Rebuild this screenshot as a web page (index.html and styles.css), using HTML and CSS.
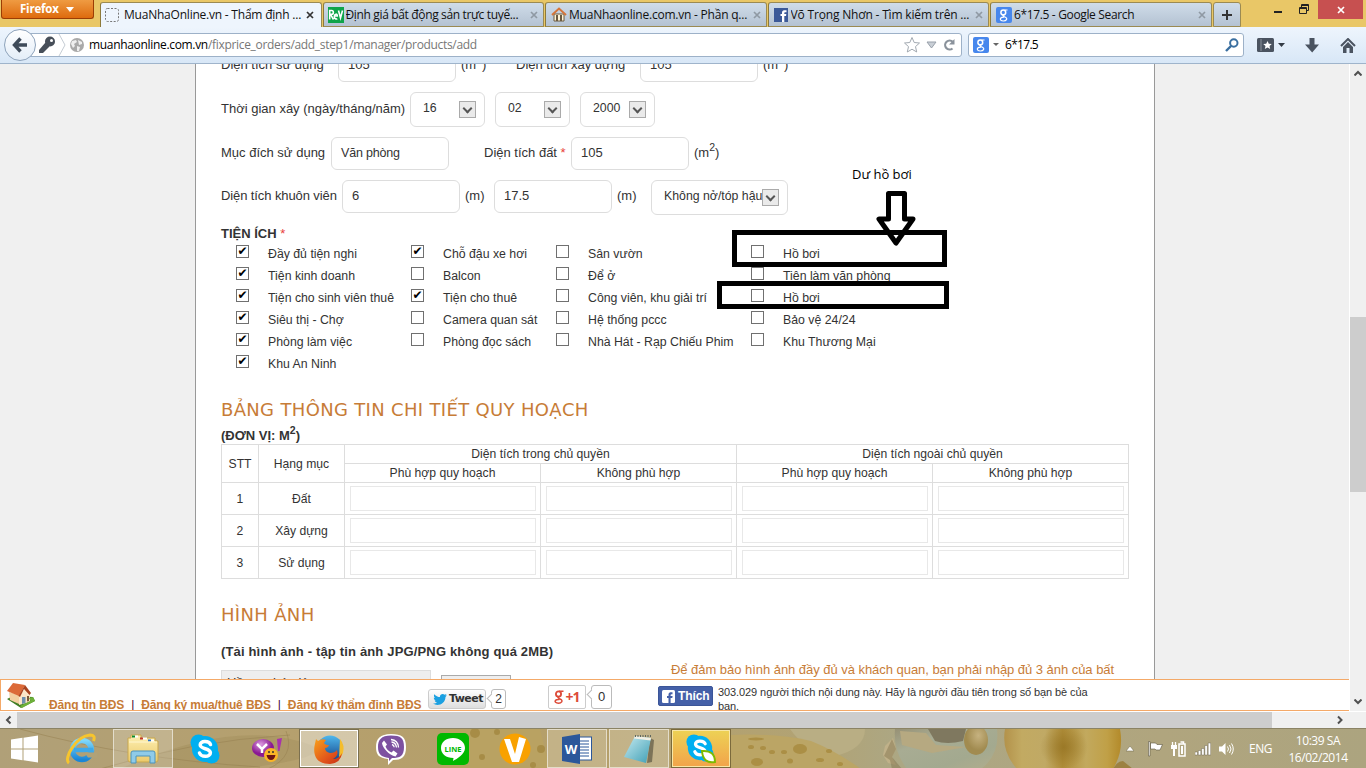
FILE: index.html
```html
<!DOCTYPE html>
<html lang="vi">
<head>
<meta charset="utf-8">
<title>MuaNhaOnline.vn - Thẩm định giá</title>
<link rel="stylesheet" href="styles.css">
</head>
<body>
<svg class="defs" width="0" height="0">
  <defs>
    <linearGradient id="fox" x1="0" y1="0" x2="1" y2="1"><stop offset="0" stop-color="#f8a01c"/><stop offset=".6" stop-color="#e2561b"/><stop offset="1" stop-color="#c62d14"/></linearGradient>
    <linearGradient id="sea" x1="0" y1="0" x2="0" y2="1"><stop offset="0" stop-color="#4fb7ec"/><stop offset="1" stop-color="#123f86"/></linearGradient>
    <linearGradient id="ie" x1="0" y1="0" x2="0" y2="1"><stop offset="0" stop-color="#7fd8fb"/><stop offset="1" stop-color="#1b86d6"/></linearGradient>
    <linearGradient id="pad" x1="0" y1="0" x2="1" y2="1"><stop offset="0" stop-color="#c7ebf1"/><stop offset="1" stop-color="#3f9fb5"/></linearGradient>
    <linearGradient id="folder" x1="0" y1="0" x2="0" y2="1"><stop offset="0" stop-color="#fdf0b4"/><stop offset="1" stop-color="#ecca6a"/></linearGradient>
    <radialGradient id="purple" cx=".4" cy=".3"><stop offset="0" stop-color="#dc9be0"/><stop offset="1" stop-color="#8a1a93"/></radialGradient>
    <linearGradient id="gold" x1="0" y1="0" x2="1" y2="0"><stop offset="0" stop-color="#b3924a"/><stop offset=".15" stop-color="#c2aa62"/><stop offset=".35" stop-color="#c0a965"/><stop offset=".5" stop-color="#af8d39"/><stop offset=".7" stop-color="#c2a95e"/><stop offset=".88" stop-color="#c0a047"/><stop offset="1" stop-color="#b38a2a"/></linearGradient>
    <radialGradient id="shade"><stop offset="0" stop-color="#92701f" stop-opacity=".7"/><stop offset="1" stop-color="#92701f" stop-opacity="0"/></radialGradient>
    <linearGradient id="silver" x1="0" y1="0" x2="1" y2="1"><stop offset="0" stop-color="#979175"/><stop offset=".3" stop-color="#a8ac93"/><stop offset=".7" stop-color="#a3a98f"/><stop offset="1" stop-color="#b2ad8c"/></linearGradient>
    <radialGradient id="bead" cx=".6" cy=".35"><stop offset="0" stop-color="#c6b280"/><stop offset="1" stop-color="#a18b50"/></radialGradient>
    <linearGradient id="wall" x1="0" y1="0" x2="1" y2="0"><stop offset="0" stop-color="#b0a078"/><stop offset=".2" stop-color="#b5a06e"/><stop offset=".42" stop-color="#b59f69"/><stop offset=".6" stop-color="#b1a375"/><stop offset=".66" stop-color="#aca784"/><stop offset=".85" stop-color="#b0a57e"/><stop offset="1" stop-color="#aca47f"/></linearGradient>
    <symbol id="skype" viewBox="0 0 32 32"><circle cx="9.500" cy="9.500" r="8" fill="#00aff0"/><circle cx="22.500" cy="22.500" r="8" fill="#00aff0"/><circle cx="16" cy="16" r="13" fill="#00aff0"/><path d="M21.500 11.500C20 7.500 11 7.500 11.200 12c.2 4.600 10.200 3 10.200 7.800 0 4.600-9.200 4.700-10.900.2" fill="none" stroke="#fff" stroke-width="3.500" stroke-linecap="round"/></symbol>
    <symbol id="g" viewBox="0 0 16 16"><rect width="16" height="16" rx="2" fill="#4787ed"/><circle cx="7.300" cy="5.400" r="2.400" fill="none" stroke="#fff" stroke-width="1.500"/><path d="M8.500 3h3M8.500 8c-3 0-1.500 1.500.5 2 3.500 1.500 1 4-1.500 4s-4-1.500-2.700-3c.8-.8 2-1 3.500-.9" fill="none" stroke="#fff" stroke-width="1.200"/></symbol>
    <symbol id="x" viewBox="0 0 8 8"><path d="M1 1l6 6M7 1L1 7" stroke="currentColor" stroke-width="1.700"/></symbol>
  </defs>
</svg>

<header class="tabstrip">
  <div class="appmenu">Firefox <svg width="8" height="5" viewBox="0 0 8 5"><path d="M0 0h8L4 5z" fill="#fff"/></svg></div>
  <div class="tab active">
    <svg width="14" height="14"><rect x=".5" y=".5" width="13" height="13" rx="2" fill="none" stroke="#777" stroke-dasharray="2 1.500"/></svg>
    <span class="tt">MuaNhaOnline.vn - Thẩm định ...</span><svg class="close" width="8" height="8"><use href="#x"/></svg>
  </div>
  <div class="tab t2">
    <svg width="16" height="16" viewBox="0 0 16 16"><rect width="16" height="16" fill="#0fa44a"/><path d="M1.700 12.500V3.500h2c2.200 0 2.200 3.800 0 3.800H2.500L5.500 12.500M6.700 9h2.600c0-2.700-3-2.300-3 .5s2 2.700 3 2.200M10.500 3.500l2 7.500 2-7.500" stroke="#fff" stroke-width="1.600" fill="none"/></svg>
    <span class="tt">Định giá bất động sản trực tuyế...</span><svg class="close" width="8" height="8"><use href="#x"/></svg>
  </div>
  <div class="tab t3">
    <svg width="16" height="16" viewBox="0 0 16 16"><path d="M3 7h10v7H3z" fill="#fff3d6" stroke="#6b5a40"/><path d="M1 8l7-6.500L15 8" fill="none" stroke="#d5753a" stroke-width="2"/><path d="M5 14V8h2v6zM9 14V8h2v6z" fill="#6b5a40"/></svg>
    <span class="tt">MuaNhaonline.com.vn - Phần q...</span><svg class="close" width="8" height="8"><use href="#x"/></svg>
  </div>
  <div class="tab t4">
    <svg width="14" height="14" viewBox="0 0 14 14"><rect width="14" height="14" fill="#3b5998"/><path d="M8 14V8H6.500V6H8V4.500C8 2.500 9.500 2 12.500 2.200v2c-1.600 0-2.200 0-2.200.9V6h2L12 8h-1.700v6z" fill="#fff"/></svg>
    <span class="tt">Võ Trọng Nhơn - Tìm kiếm trên ...</span><svg class="close" width="8" height="8"><use href="#x"/></svg>
  </div>
  <div class="tab t5">
    <svg width="16" height="16"><use href="#g"/></svg>
    <span class="tt">6*17.5 - Google Search</span><svg class="close" width="8" height="8"><use href="#x"/></svg>
  </div>
  <div class="newtab"><svg width="10" height="10"><path d="M5 0v10M0 5h10" stroke="#333" stroke-width="2"/></svg></div>
  <div class="winbtns">
    <svg width="8" height="20"><path d="M0 12h8" stroke="#222" stroke-width="2"/></svg>
    <svg width="10" height="20" fill="none" stroke="#222"><path d="M.5 7.500h7v6h-7zM2.500 7V4.500h7v6H8M.5 8.500h7M2.500 5.500h7"/></svg>
    <div class="winclose"><svg width="8" height="8"><use href="#x"/></svg></div>
  </div>
</header>

<nav class="toolbar">
  <div class="urlbar">
    <svg class="keys" width="36" height="22" viewBox="0 0 36 22"><g fill="#474f59"><circle cx="19" cy="7.500" r="5"/><path d="M14.500 8.500l4 4L12 19H8v-3z"/></g><circle cx="20.500" cy="6.500" r="1.500" fill="#fff"/><path d="M28 0l6 11-6 11" fill="none" stroke="#c5ccd4"/></svg>
    <svg class="globe" width="14" height="14" viewBox="0 0 14 14"><circle cx="7" cy="7" r="7" fill="#a9a9a9"/><path d="M2 3l4-1 1 2-3 2 1 2-2 2-2-4zM8 2l4 2v2L9 7zM7 8l3 1-1 4H7z" fill="#eee"/></svg>
    <span class="url"><b>muanhaonline.com.vn</b>/fixprice_orders/add_step1/manager/products/add</span>
    <svg width="58" height="18" viewBox="0 0 58 18"><path d="M9 1.500l2.200 5 5.300.5-4 3.600 1.200 5.400L9 13.200 4.300 16l1.200-5.400-4-3.600 5.300-.5z" fill="#fff" stroke="#a2a9b1"/><path d="M24 6h9l-4.500 6z" fill="#c9cfd6" stroke="#98a0aa"/><path d="M49.500 12.500a4.500 4.500 0 1 1 .3-6.700" fill="none" stroke="#8a929b" stroke-width="2.200"/><path d="M51.500 3v5.500H46z" fill="#8a929b"/></svg>
  </div>
  <div class="back"><svg width="16" height="16" viewBox="0 0 16 16"><path d="M8.500 1.500L2.500 8l6 6.500M3 8h12" fill="none" stroke="#3f4b5a" stroke-width="3.400"/></svg></div>
  <div class="search">
    <svg width="16" height="16"><use href="#g"/></svg>
    <svg width="6" height="4"><path d="M0 0h6L3 3z" fill="#666"/></svg>
    <span>6*17.5</span>
    <svg width="14" height="14" viewBox="0 0 14 14" fill="none" stroke="#3a6fa0"><circle cx="8.800" cy="5" r="3.700" stroke-width="2"/><path d="M6 8l-5 5" stroke-width="2.400"/></svg>
  </div>
  <svg class="bm" width="30" height="16" viewBox="0 0 30 16"><rect x="0" y="1" width="17" height="14" rx="1.500" fill="#4a5360"/><path d="M4 2v12" stroke="#8a929b"/><path d="M10.500 4l1.300 2.700 3 .3-2.300 2 .7 3-2.700-1.600L7.800 12l.7-3-2.300-2 3-.3z" fill="#fff"/><path d="M21 6h7l-3.500 4z" fill="#333b45"/></svg>
  <svg class="dl" width="15" height="15" viewBox="0 0 15 15"><path d="M4.500 0h5v6.500H14l-6.800 8L0 6.500h4.500z" fill="#4a5360"/></svg>
  <svg class="home" width="16" height="15" viewBox="0 0 16 15"><path d="M1 8l7-7 7 7" fill="none" stroke="#4a5360" stroke-width="2"/><path d="M3 9l5-5 5 5v6H9.500v-5h-3v5H3z" fill="#4a5360"/></svg>
</nav>

<div class="viewport">
  <div class="canvas">
    <main class="page">
      <div class="row r1"><span class="lb w117">Diện tích sử dụng</span><div class="inp">105</div><span class="u w60">(m<sup>2</sup>)</span><span class="lb w124">Diện tích xây dựng</span><div class="inp">105</div><span class="u">(m<sup>2</sup>)</span></div>
      <div class="row r2"><span class="lb w189">Thời gian xây (ngày/tháng/năm)</span><div class="sel">16<i></i></div><div class="sel">02<i></i></div><div class="sel">2000<i></i></div></div>
      <div class="row r3"><span class="lb w110">Mục đích sử dụng</span><div class="inp tight">Văn phòng</div><span class="lb w87">Diện tích đất <em>*</em></span><div class="inp">105</div><span class="u">(m<sup>2</sup>)</span></div>
      <div class="row r4"><span class="lb w121">Diện tích khuôn viên</span><div class="inp">6</div><span class="u w34">(m)</span><div class="inp">17.5</div><span class="u w39">(m)</span><div class="sel wide">Không nở/tóp hậu<i></i></div></div>

      <h3 class="sub amen">TIỆN ÍCH <em>*</em></h3>
      <div class="checks">
        <label class="on">Đầy đủ tiện nghi</label><label class="on">Chỗ đậu xe hơi</label><label>Sân vườn</label><label>Hồ bơi</label>
        <label class="on">Tiện kinh doanh</label><label>Balcon</label><label>Để ở</label><label>Tiện làm văn phòng</label>
        <label class="on">Tiện cho sinh viên thuê</label><label class="on">Tiện cho thuê</label><label>Công viên, khu giải trí</label><label>Hồ bơi</label>
        <label class="on">Siêu thị - Chợ</label><label>Camera quan sát</label><label>Hệ thống pccc</label><label>Bảo vệ 24/24</label>
        <label class="on">Phòng làm việc</label><label>Phòng đọc sách</label><label>Nhà Hát - Rạp Chiếu Phim</label><label>Khu Thương Mại</label>
        <label class="on">Khu An Ninh</label>
      </div>

      <h2 class="h2a">BẢNG THÔNG TIN CHI TIẾT QUY HOẠCH</h2>
      <h3 class="sub unit">(ĐƠN VỊ: M<sup>2</sup>)</h3>
      <table>
        <colgroup><col class="c1"><col class="c2"><col class="c3"><col class="c3"><col class="c3"><col class="c3"></colgroup>
        <tr class="th"><td rowspan="2">STT</td><td rowspan="2">Hạng mục</td><td colspan="2">Diện tích trong chủ quyền</td><td colspan="2">Diện tích ngoài chủ quyền</td></tr>
        <tr class="th"><td>Phù hợp quy hoạch</td><td>Không phù hợp</td><td>Phù hợp quy hoạch</td><td>Không phù hợp</td></tr>
        <tr class="td"><td>1</td><td>Đất</td><td><div></div></td><td><div></div></td><td><div></div></td><td><div></div></td></tr>
        <tr class="td"><td>2</td><td>Xây dựng</td><td><div></div></td><td><div></div></td><td><div></div></td><td><div></div></td></tr>
        <tr class="td"><td>3</td><td>Sử dụng</td><td><div></div></td><td><div></div></td><td><div></div></td><td><div></div></td></tr>
      </table>
      <h2 class="h2b">HÌNH ẢNH</h2>
      <h3 class="sub photo">(Tải hình ảnh - tập tin ảnh JPG/PNG không quá 2MB)</h3>
      <div class="upload"><div class="doc">Hồ sơ pháp lý</div><div class="browse"></div><p>Để đảm bảo hình ảnh đầy đủ và khách quan, bạn phải nhập đủ 3 ảnh của bất</p></div>
    </main>
  </div>
  <div class="vscroll">
    <svg width="8" height="6"><path d="M0.500 5.500L4 2l3.500 3.500" fill="none" stroke="#505050" stroke-width="2"/></svg>
    <div class="vthumb"></div>
    <svg class="dn" width="8" height="6"><path d="M.5.500L4 4 7.500.500" fill="none" stroke="#505050" stroke-width="2"/></svg>
  </div>
  <div class="dock">
    <svg class="house" width="30" height="26" viewBox="0 0 30 26"><path d="M1 17l6-3 20 1 2 4-14 7z" fill="#3f7d24"/><path d="M3 10l10 3v9L4 18z" fill="#f3cfa0"/><path d="M13 13l6-6 5 6v7l-11 3z" fill="#fbe6c8"/><path d="M1 9L7 1l12 2-6 11z" fill="#dc6a38"/><path d="M19 3l6 8-1.500 2L18 7l-4 8-1.500-1z" fill="#a8431f"/><path d="M16 15h3.500v6l-3.500 1z" fill="#6d8fae"/><path d="M21 14h2v5l-2 .5z" fill="#7a5a3a"/><path d="M14 24l10-5 5 0-13 7zM23 16l4-1 2 4-4 1z" fill="#6db03a"/></svg>
    <div class="links"><b>Đăng tin BĐS</b><i>|</i><b>Đăng ký mua/thuê BĐS</b><i>|</i><b>Đăng ký thẩm định BĐS</b></div>
    <div class="tweet"><svg width="14" height="12" viewBox="0 0 14 12"><path d="M0 10.500c2 .1 3-.4 4-1C2.500 9.500 2 8.500 1.700 7.600h1.200C1.500 7 .8 6 .8 4.800l1.200.3C.8 4 .7 2.500 1.300 1.200 3 3 4.800 4 7 4.100 6.500 1 10 0 11.600 1.700l1.900-.7-1 1.700 1.500-.4-1.500 1.600C12.400 10.500 5 14 0 10.500z" fill="#1ba0e1"/></svg>Tweet</div>
    <div class="bubble b2">2</div>
    <div class="gplus"><svg width="11" height="14" viewBox="0 0 11 14" fill="none" stroke="#dd4b39"><circle cx="4.500" cy="4" r="2.600" stroke-width="1.800"/><path d="M5 1.300h4.500M5.500 6.700c-2.800.5-1.200 1.700 1 2.500 3 1.600.8 4-2 4s-4-1.500-3-2.800c.8-.8 2.300-1 4-.8" stroke-width="1.500"/></svg>+1</div>
    <div class="bubble b0">0</div>
    <div class="like"><svg width="13" height="13" viewBox="0 0 13 13"><rect width="13" height="13" rx="1.500" fill="#fff"/><path d="M6.500 13V8H5V6h1.500V4.500c0-2 1.500-2.500 4-2.300v2C9 4.200 8.600 4.300 8.600 5v1h2l-.3 2H8.600v5z" fill="#4460a8"/></svg>Thích</div>
    <p class="fans">303.029 người thích nội dung này. Hãy là người đầu tiên trong số bạn bè của<br>bạn.</p>
  </div>
  <svg class="marks" width="240" height="150" viewBox="715 160 240 150">
    <g fill="none" stroke="#000" stroke-width="5"><path d="M734.500 232.500h210v32h-210z"/><path d="M719.500 283.500h227v23h-227z"/><path d="M888.500 193.500h16V219H913l-17 24-17-24h9.500z" stroke-linejoin="round"/></g>
    <text class="note" x="852" y="178.500">Dư hồ bơi</text>
  </svg>
</div>

<div class="hscroll"><svg width="17" height="16"><path d="M10.500 4.500L7 8l3.500 3.500" fill="none" stroke="#505050" stroke-width="2"/></svg><div class="hthumb"></div><svg class="rt" width="17" height="16"><path d="M6 4.500L9.500 8 6 11.500" fill="none" stroke="#505050" stroke-width="2"/></svg></div>

<footer class="taskbar">
  <svg class="wallpaper" width="1366" height="40" viewBox="0 0 1366 40">
    <rect width="1366" height="40" fill="url(#wall)"/>
    <path d="M120 40Q220 -5 290 10T240 40z" fill="#a48f5e" opacity=".5"/><path d="M100 40Q190 12 290 6M20 0Q130 30 260 38M286 2q10 25-18 38" stroke="#988252" fill="none" opacity=".55"/>
    <path d="M450 0h90l10 40H440z" fill="#b9a262"/>
    <g fill="#9c7f35" opacity=".6"><circle cx="475" cy="4" r="5"/><circle cx="497" cy="3" r="3"/><circle cx="482" cy="28" r="3"/><circle cx="541" cy="20" r="4"/><circle cx="533" cy="36" r="3"/></g>
    <path d="M790 0h75q0 20-30 27Q805 22 790 0z" fill="#b9ae84"/>
    <path d="M731 6q45-2 80 6 25 10 50 28H731z" fill="#bba565"/>
    <g fill="#a58638" opacity=".7"><ellipse cx="800" cy="20" rx="7" ry="5"/><ellipse cx="757" cy="33" rx="6" ry="4"/><ellipse cx="751" cy="18" rx="3" ry="2"/><ellipse cx="763" cy="19" rx="3" ry="2"/><ellipse cx="772" cy="23" rx="3" ry="2"/><ellipse cx="784" cy="23" rx="3" ry="2"/><ellipse cx="790" cy="32" rx="3" ry="2.500"/><ellipse cx="820" cy="31" rx="4" ry="2"/><ellipse cx="829" cy="22" rx="3" ry="2"/><ellipse cx="840" cy="35" rx="3" ry="2"/><ellipse cx="756" cy="10" rx="8" ry="1.500"/></g>
    <path d="M895 0h102q3 26-16 40h-74q-14-18-12-40z" fill="url(#silver)"/>
    <path d="M928 0h38l-3 12q-16 4-28 0z" fill="#7f785f"/><path d="M900 2l26 2 10 12 30 2-34 6-30-8z" fill="#b6a981"/><ellipse cx="976" cy="11" rx="12" ry="15" fill="url(#bead)"/>
    <path d="M893 9l-8 8-2 9 5 8 8 2-4-8 4-8z" fill="#c0b189"/><path d="M892 10l4 10-4 8 10 12h-10l-2-9-6-4z" fill="#857752" opacity=".5"/>
    <path d="M1005 0h115q4 22-7 40h-96q-16-18-12-40z" fill="url(#gold)"/><ellipse cx="1064" cy="18" rx="24" ry="22" fill="url(#shade)"/>
    <path d="M1113 40q4-8 10-8l10 8z" fill="#9c8142"/>
  </svg>
  <div class="tb start"><svg width="28" height="28" viewBox="0 0 28 28"><path d="M0 4.500l11.500-1.700v10.700H0zM12.500 2.700L27 .5v13H12.500zM0 14.500h11.500v10.700L0 23.500zM12.500 14.500H27v13l-14.500-2.200z" fill="#fff"/></svg></div>
  <div class="tb"><svg width="32" height="32" viewBox="0 0 32 32"><circle cx="17" cy="17" r="9.500" fill="none" stroke="url(#ie)" stroke-width="5.500"/><path d="M9 17h19" stroke="#3fa9e8" stroke-width="4.500"/><path d="M19.500 19.500H32v5h-9z" fill="#b1a277"/><path d="M4 30C-2 26 11 3 25 2c4 0 5 2 3.500 6" fill="none" stroke="#f7c52d" stroke-width="3"/></svg></div>
  <div class="tb open"><svg width="32" height="32" viewBox="0 0 32 32"><path d="M1 5h3V2h10v3h14v3h3v19q0 2-2 2H3q-2 0-2-2z" fill="url(#folder)" stroke="#c9a74c"/><path d="M6 3.500h5M15 5.500h5M22 7.500h5" stroke="#fff" stroke-width="2"/><path d="M5 3.500h3" stroke="#0a8a2a" stroke-width="2"/><path d="M13 5.500h3" stroke="#c43a2a" stroke-width="2"/><path d="M21 7.500h3" stroke="#2a72c4" stroke-width="2"/><path d="M2 9h28" stroke="#fff6cf"/><path d="M4 30V20q0-2 2-2h20q2 0 2 2v10h-5v-7H9v7z" fill="#8fcbe8" stroke="#4c93bb"/></svg></div>
  <div class="tb"><svg width="32" height="32"><use href="#skype"/></svg></div>
  <div class="tb"><svg width="32" height="32" viewBox="0 0 32 32"><ellipse cx="12" cy="15" rx="11" ry="9" fill="url(#purple)"/><path d="M6 11l5 5 5-5M11 16v4" stroke="#fff" stroke-width="2.500" fill="none"/><path d="M26 6l5-1-2.500 13H27z" fill="#a832ae"/><circle cx="20" cy="22" r="7" fill="#fbb526"/><path d="M15.500 22h9q-1 5-4.500 5t-4.500-5z" fill="#6e1515"/><circle cx="18" cy="19" r="1" fill="#333"/><circle cx="22" cy="19" r="1" fill="#333"/></svg></div>
  <div class="tb cur"><svg width="32" height="32" viewBox="0 0 32 32"><circle cx="17" cy="15.500" r="13" fill="url(#sea)"/><path d="M27 6q5 6 3 14-2 4-4 6z" fill="#f5bd2b"/><path d="M3 6l2 2q4-3 8-1l-2 3q1 2 5 2-1 3-4 3 0 4 5 5 5 0 7-3 2 6-4 9 6 0 9-6-1 10-12 11C4 31 0 23 1.500 13z" fill="url(#fox)"/></svg></div>
  <div class="tb"><svg width="32" height="32" viewBox="0 0 32 32"><path d="M16 1C27 1 31 4 31 14s-4 13-13 13l-5 5v-6C4 25 1 22 1 14S5 1 16 1z" fill="#fff"/><path d="M16 2.500C26 2.500 29 5 29 14s-4 11-12 11l-3 3v-3C6 24 3 21 3 14S6 2.500 16 2.500z" fill="#7d51a0"/><path d="M9 7.500l3 4-1.500 2q2 4.500 6 6l2-2 4 3-2 3C14 22 7.500 15 7 10z" fill="#fff"/><path d="M16 6.500q7 .5 7.500 8M16.500 9q4.500.5 5 5.500M17 11.500q2 .5 2.200 2.700" fill="none" stroke="#fff" stroke-width="1.300"/></svg></div>
  <div class="tb"><svg width="32" height="32" viewBox="0 0 32 32"><rect width="32" height="32" rx="5" fill="#00b900"/><path d="M16 5c7 0 12 4.500 12 10 0 6-8 11-12 13l.5-3C9 25 4 21 4 15S9 5 16 5z" fill="#fff"/><text x="16" y="18.500" class="line" text-anchor="middle">LINE</text></svg></div>
  <div class="tb"><svg width="32" height="32" viewBox="0 0 32 32"><circle cx="16" cy="16" r="15.500" fill="#f8a100"/><path d="M5 6h6l5 15 4-17 7 2-7 23h-7z" fill="#fff"/></svg></div>
  <div class="tb open"><svg width="32" height="32" viewBox="0 0 32 32"><rect x="16" y="4" width="14.500" height="23" fill="#fff" stroke="#2b579a"/><path d="M18 8h10M18 11h10M18 14h10M18 17h10M18 20h10M18 23h10" stroke="#2b579a"/><path d="M1 4l18-3v30L1 28z" fill="#2b579a"/><text x="10" y="20.500" class="word" text-anchor="middle">W</text></svg></div>
  <div class="tb open"><svg width="32" height="32" viewBox="0 0 32 32"><path d="M27 5l4 2-2 22-5 1z" fill="#7c7358"/><path d="M12 3l16 2-5 25L1 24z" fill="url(#pad)"/><path d="M12 3l16 2-.5 2.500-16.500-2z" fill="#f1efe4"/><path d="M12 3h16" stroke="#5f675f" stroke-width="2" stroke-dasharray="1 1.500"/></svg></div>
  <div class="tb alert"><svg width="32" height="32" viewBox="0 0 32 32"><use href="#skype" width="30" height="30"/><path d="M17 18q13-1 13 11-12 2-13-11z" fill="#fff" stroke="#7fba00" stroke-width="2"/></svg></div>
  <div class="tray">
    <svg width="8" height="6"><path d="M4 0l4 5H0z" fill="#fff" stroke="#6c6448" stroke-width=".5"/></svg>
    <svg width="16" height="16" viewBox="0 0 16 16"><path d="M1.500.500h1.500V15h-1.500zM3.500 2h5L10 3.500h5.500L13 9H9L8 8H3.500z" fill="#fff" stroke="#5a5440" stroke-width=".6"/></svg>
    <svg width="16" height="16" viewBox="0 0 16 16"><path d="M8 3h6v12H8zM9.500 1h3v2" fill="none" stroke="#fff" stroke-width="1.500"/><path d="M10 5h2v8h-2z" fill="#fff"/><path d="M1.500 1v3M4.500 1v3" stroke="#fff" stroke-width="1.300"/><path d="M0 4h6v4H4v7H2V8H0z" fill="#fff"/></svg>
    <svg width="16" height="14" viewBox="0 0 16 14"><path d="M0 10h2.500v3H0zM3.300 8.500h2.500V13H3.300zM6.600 6.500h2.500V13H6.600zM9.900 3.500h2.500V13H9.900zM13.200 1h2.500v12h-2.500z" fill="#fff" stroke="#5a5440" stroke-width=".4"/></svg>
    <svg width="15" height="14" viewBox="0 0 15 14"><path d="M0 4.500h3L6.500 1v12L3 9.500H0z" fill="#fff"/><path d="M8.500 4.500q2 2.500 0 5M10.500 3q3 4 0 8M12.500 1.500q3.500 5.500 0 11" fill="none" stroke="#fff"/></svg>
    <span class="eng">ENG</span>
    <div class="clock"><span>10:39 SA</span><span class="date">16/02/2014</span></div>
  </div>
</footer>
</body>
</html>
```
FILE: styles.css
```css
*, *::before, *::after { box-sizing: border-box; }
body { margin: 0; width: 1366px; height: 768px; overflow: hidden; display: flex; flex-direction: column; font: 13px/18px "Liberation Sans", Arial, sans-serif; color: #333; background: #f0f0f0; white-space: nowrap; }
svg { display: block; flex: none; }
.defs { position: absolute; }
h2, h3, p { margin: 0; }
em { font-style: normal; color: #e8403a; }

.tabstrip { height: 27px; flex: none; display: flex; background: #e9c767; font: 12px/18px "Open Sans", sans-serif; color: #000; }
.appmenu { width: 93px; height: 19px; margin: 0 6px 0 1px; border: 1px solid #9c3d05; border-top: 0; border-radius: 0 0 3px 3px; background: linear-gradient(#ef9b42, #de6b0e); color: #fff; font-weight: bold; font-size: 11.500px; letter-spacing: -.2px; display: flex; align-items: center; gap: 7px; padding-left: 18px; }
.tab { width: 221.500px; height: 25px; margin: 2px 1px 0 0; padding-left: 5px; display: flex; align-items: center; gap: 3px; border: 1px solid #9b8a52; border-left-color: #8d7a3a; border-radius: 3px 3px 0 0; background: linear-gradient(#cfdce9, #b4c2d2); color: #111; }
.tab.active { background: #eef5fd; border-bottom: 0; padding-left: 4px; }
.tab.active .tt { margin-left: 2px; letter-spacing: -.22px; }
.tt { flex: 1; overflow: hidden; letter-spacing: -.25px; }
.t2 { padding-left: 4px; gap: 2px; }
.t2 .tt { letter-spacing: -.35px; }
.t3 .tt { margin-left: -1px; letter-spacing: -.22px; }
.t4 .tt { letter-spacing: -.17px; }
.t5 .tt { margin-left: -1px; letter-spacing: -.35px; }
.close { color: #8f99a3; margin-right: 5px; }
.active .close { color: #333; margin-right: 7px; }
.newtab { width: 28px; height: 25px; margin-top: 2px; border: 1px solid #9b8a52; border-radius: 3px 3px 0 0; background: linear-gradient(#cfdce9, #b4c2d2); display: grid; place-items: center; }
.winbtns { margin-left: auto; padding-right: 3px; display: flex; gap: 17px; }
.winbtns > svg:nth-child(2) { margin-right: -8px; }
.winclose { width: 45px; height: 19px; background: #c75050; color: #fff; display: grid; place-items: center; }

.toolbar { height: 37px; flex: none; display: flex; align-items: center; padding: 0 10px 0 30px; background: linear-gradient(#eef5fd, #d8e7f7); border-bottom: 1px solid #9fb4cb; position: relative; font: 12px/18px "Open Sans", sans-serif; color: #000; }
.urlbar { width: 932px; height: 24px; border: 1px solid #9db1c8; border-radius: 0 3px 3px 0; background: #fff; display: flex; align-items: center; }
.back { position: absolute; left: 4px; top: 2px; width: 32px; height: 32px; border: 1px solid #8ea3bb; border-radius: 50%; background: linear-gradient(#fff, #e3edf8); display: grid; place-items: center; }
.globe { margin: 0 5px 0 3px; }
.url { flex: 1; color: #777; letter-spacing: -.32px; }
.url b { font-weight: normal; color: #000; }
.search { width: 276px; height: 24px; margin-left: 6px; border: 1px solid #9db1c8; border-radius: 3px; background: #fff; display: flex; align-items: center; padding: 0 4px; }
.search > svg:nth-child(2) { margin: 0 6px 0 4px; }
.search span { flex: 1; letter-spacing: -.7px; }
.bm { margin-left: 13px; }
.dl { margin-left: 18px; }
.home { margin-left: auto; }

.viewport { height: 647px; flex: none; position: relative; display: flex; overflow: hidden; }
.canvas { width: 1349px; height: 647px; overflow: hidden; }
.page { width: 960px; height: 660px; margin-left: 195px; padding-left: 25px; background: #fff; border: solid #999; border-width: 0 1px; display: flow-root; }
.row { display: flex; height: 33px; margin-bottom: 10px; line-height: 31px; }
.r1 { margin-top: -15px; line-height: 32px; }
.r2, .r4 { height: 35px; }
.r4 { margin-bottom: 9px; }
.r2 .lb { line-height: 33px; }
sup { font-size: 10.500px; line-height: 0; vertical-align: 6px; }
.inp { width: 118px; height: 33px; border: 1px solid #ddd; border-radius: 6px; padding-left: 9px; line-height: 30px; margin-right: 5px; }
.tight { margin-right: 35px; font-size: 12.500px; letter-spacing: -.2px; }
.sel { width: 75px; height: 35px; border: 1px solid #ddd; border-radius: 6px; padding: 0 8px 0 12px; margin-right: 10px; line-height: 30px; display: flex; justify-content: space-between; font-size: 12.300px; }
.sel i { width: 17px; height: 17px; margin-top: 8px; border: 1px solid #aaa; background: #eaeaea; display: grid; place-items: center; }
.sel i::after { content: ""; width: 7px; height: 7px; border: solid #555; border-width: 0 2px 2px 0; transform: translateY(-1px) rotate(45deg); }
.sel.wide { width: 137px; }
.sel.wide i { margin-left: -2px; flex: none; }
.w117 { width: 117px; } .w60 { width: 55px; } .w124 { width: 124px; } .w189 { width: 189px; } .w110 { width: 110px; } .w87 { width: 87px; } .w121 { width: 121px; letter-spacing: -.1px; } .w34 { width: 29px; } .w39 { width: 34px; }

.sub { font-size: 13px; line-height: 18px; color: #333; }
.amen { position: relative; top: 1px; }
.amen em { font-weight: normal; }
.checks { display: grid; grid-template-columns: 175px 145px 195px 200px; grid-auto-rows: 22px; padding-left: 15px; font-size: 12.300px; line-height: 24px; }
.checks label { display: flex; gap: 19px; }
.checks label::before { content: ""; width: 13px; height: 13px; margin-top: 3px; border: 1px solid #707070; background: #fff; flex: none; font: bold 12px/11px "DejaVu Sans", sans-serif; color: #000; text-align: center; }
.checks .on::before { content: "✔"; }
h2 { font: 18px/28px "DejaVu Sans", Verdana, sans-serif; color: #c77c37; letter-spacing: .33px; }
.h2a { margin-top: 22px; }
.unit { margin: 2px 0 0; line-height: 20px; height: 18px; }
table { width: 908px; table-layout: fixed; border-collapse: collapse; font-size: 12.150px; line-height: 16px; text-align: center; }
.c1 { width: 37px; } .c2 { width: 86px; } .c3 { width: 196px; }
td { border: 1px solid #ddd; padding: 0; }
.th td { height: 19px; }
.td td { height: 32px; }
td div { height: 25px; margin: 0 4px 0 5px; border: 1px solid #e8e8e8; }
.h2b { margin-top: 22px; }
.photo { margin-top: 13px; line-height: 20px; height: 18px; letter-spacing: .16px; }
.upload { display: flex; margin-top: 10px; height: 30px; }
.doc { width: 210px; border: 1px solid #ddd; background: #eee; padding: 3px 5px; }
.browse { width: 70px; height: 24px; margin: 5px 160px 0 10px; border: 1px solid #aaa; background: #eee; }
.upload p { color: #c77c37; margin-top: -9px; letter-spacing: -.04px; }

.vscroll { width: 17px; border-left: 1px solid #fff; background: #f0f0f0; display: flex; flex-direction: column; align-items: center; padding: 6px 0; }
.vthumb { width: 16px; height: 175px; margin-top: 241px; background: #cdcdcd; }
.dn { margin-top: auto; }

.dock { position: absolute; left: 0; top: 615px; width: 1349px; height: 32px; background: #fff; border: 1px solid #f4a968; border-right: 0; display: flex; overflow: hidden; }
.house { margin: 2px 13px 0 5px; }
.links { display: flex; padding-top: 16px; width: 379px; color: #c77c37; font-size: 12px; letter-spacing: -.12px; }
.links i { font-style: normal; color: #403; margin: 0 7px; }
.tweet { width: 58px; height: 20px; margin-top: 9px; border: 1px solid #ccc; border-radius: 3px; background: linear-gradient(#fff, #dedede); display: flex; align-items: center; gap: 2px; padding-left: 4px; font: bold 11px/18px "DejaVu Sans", sans-serif; letter-spacing: -.55px; }
.bubble { position: relative; height: 20px; border: 1px solid #bbb; border-radius: 3px; display: grid; place-items: center; font-size: 12px; background: #fff; }
.bubble::before { content: ""; position: absolute; left: -4px; top: 5px; width: 7px; height: 7px; background: #fff; border: solid #bbb; border-width: 0 0 1px 1px; transform: rotate(45deg); }
.b2 { width: 15px; margin: 9px 42px 0 5px; }
.gplus { width: 38px; height: 24px; margin-top: 5px; border: 1px solid #ccc; border-radius: 2px; color: #dd4b39; font: bold 14px/22px "Open Sans", sans-serif; letter-spacing: -1px; display: flex; align-items: center; justify-content: center; }
.b0 { width: 21px; height: 24px; margin: 5px 46px 0 5px; font-size: 13px; }
.like { width: 55px; height: 20px; margin-top: 6px; border-radius: 2px; background: #4460a8; border: 1px solid #3b5598; color: #fff; font: bold 12px/18px "Liberation Sans", sans-serif; display: flex; align-items: center; gap: 3px; padding-left: 3px; letter-spacing: -.1px; }
.fans { margin: 5px 0 0 5px; width: 380px; font-size: 11px; letter-spacing: -.09px; line-height: 14px; }
.marks { position: absolute; left: 715px; top: 96px; }
.note { font: 13px "Open Sans", sans-serif; fill: #000; }

.hscroll { height: 17px; flex: none; border-top: 1px solid #fff; background: #f0f0f0; display: flex; }
.hthumb { width: 1255px; background: #cdcdcd; }
.rt { margin-left: auto; margin-right: 17px; }

.taskbar { height: 40px; flex: none; position: relative; display: flex; gap: 2px; border-top: 1px solid #8b8365; }
.wallpaper { position: absolute; left: 0; top: 0; }
.tb { position: relative; width: 60px; height: 39px; display: grid; place-items: center; border: 1px solid transparent; }
.start { width: 49px; }
.open { background: rgba(255,255,255,.2); border-color: rgba(255,255,255,.55); }
.cur { background: rgba(255,255,255,.42); border-color: #fff; outline: 1px solid #7b7050; outline-offset: -1px; box-shadow: inset 0 0 0 1px #fff; }
.alert { background: linear-gradient(#edd255, #f2a34a); border-color: #7b6a3c; box-shadow: inset 0 0 0 1px #f9e7a5; }
.line { font: bold 7.500px "Open Sans", sans-serif; fill: #00b900; }
.word { font: bold 13px "Open Sans", sans-serif; fill: #fff; }
.tray { position: relative; margin-left: auto; padding-right: 19px; display: flex; align-items: center; gap: 8px; color: #fff; font: 12px/17px "Open Sans", sans-serif; letter-spacing: -.45px; }
.tray > svg:first-child { margin-right: 5px; }
.eng { margin: 0 9px 0 7px; }
.clock { width: 58px; display: flex; flex-direction: column; align-items: center; }
```
